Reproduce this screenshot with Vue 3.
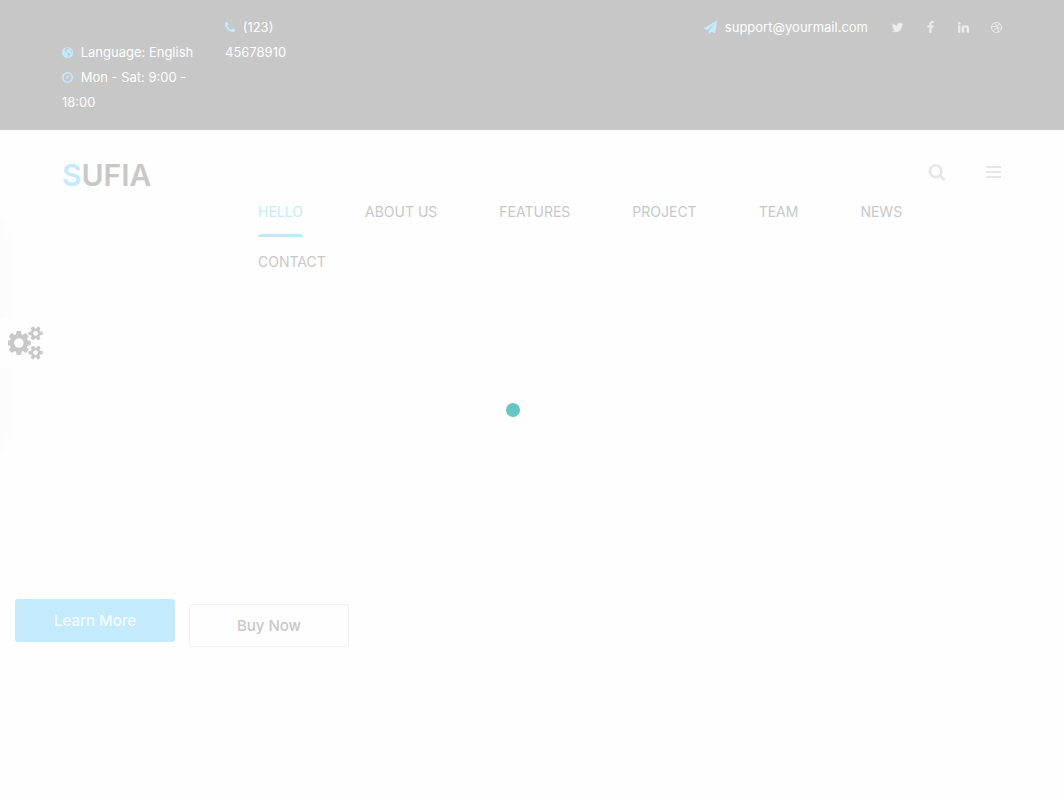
<script setup>
const links = ['Hello', 'About Us', 'Features', 'Project', 'Team', 'News', 'Contact']

const socials = [
  { name: 'Twitter', d: 'M1684 408q-67 98-162 167 1 14 1 42 0 130-38 259.5t-115.5 248.5-184.5 210.5-258 146-323 54.5q-271 0-496-145 35 4 78 4 225 0 401-138-105-2-188-64.5t-114-159.5q33 5 61 5 43 0 85-11-112-23-185.5-111.5t-73.5-205.5v-4q68 38 146 41-66-44-105-115t-39-154q0-88 44-163 121 149 294.5 238.5t371.5 99.5q-8-38-8-74 0-134 94.5-228.5t228.5-94.5q140 0 236 102 109-21 205-78-37 115-142 178 93-10 186-50z' },
  { name: 'Facebook', d: 'M1343 12v264h-157q-86 0-116 36t-30 108v189h293l-39 296h-254v759h-306v-759h-255v-296h255v-218q0-186 104-288.5t277-102.5q147 0 228 12z' },
  { name: 'LinkedIn', d: 'M477 625v991h-330v-991h330zm21-306q1 73-50.5 122t-135.5 49h-2q-82 0-132-49t-50-122q0-74 51.5-122.5t134.5-48.5 133 48.5 51 122.5zm1166 729v568h-329v-530q0-105-40.5-164.5t-126.5-59.5q-63 0-105.5 34.5t-63.5 85.5q-11 30-11 81v553h-329q2-399 2-647t-1-296l-1-48h329v144h-2q20-32 41-56t56.5-52 87-43.5 114.5-15.5q171 0 275 113.5t104 332.5z' },
]

const smallCog = 'v140q0 16-149 31-12 27-30 52 51 113 51 138 0 4-4 7-122 71-124 71-8 0-46-47t-52-68q-20 2-30 2t-30-2q-14 21-52 68t-46 47q-2 0-124-71-4-3-4-7 0-25 51-138-18-25-30-52-149-15-149-31v-140q0-16 149-31 13-29 30-52-51-113-51-138 0-4 4-7 4-2 35-20t59-34 30-16q8 0 46 46.5t52 67.5q20-2 30-2t30 2q51-71 92-112l6-2q4 0 124 70 4 3 4 7 0 25-51 138 17 23 30 52 149 15 149 31z'
const cogs = 'M832 896q0-106-75-181t-181-75-181 75-75 181 75 181 181 75 181-75 75-181zM1600 1408q0-52-38-90t-90-38-90 38-38 90q0 53 37.5 90.5t90.5 37.5 90.5-37.5 37.5-90.5zM1600 384q0-52-38-90t-90-38-90 38-38 90q0 53 37.5 90.5t90.5 37.5 90.5-37.5 37.5-90.5zM1216 805v185q0 10-7 19.5t-16 10.5l-155 24q-11 35-32 76 34 48 90 115 7 11 7 20 0 12-7 19-23 30-82.5 89.5t-78.5 59.5q-11 0-21-7l-115-90q-37 19-77 31-11 108-23 155-7 24-30 24h-186q-11 0-20-7.5t-10-17.5l-23-153q-34-10-75-31l-118 89q-7 7-20 7-11 0-21-8-144-133-144-160 0-9 7-19 10-14 41-53t47-61q-23-44-35-82l-152-24q-10-1-17-9.5t-7-19.5v-185q0-10 7-19.5t16-10.5l155-24q11-35 32-76-34-48-90-115-7-11-7-20 0-12 7-20 22-30 82-89t79-59q11 0 21 7l115 90q34-18 77-32 11-108 23-154 7-24 30-24h186q11 0 20 7.5t10 17.5l23 153q34 10 75 31l118-89q8-7 20-7 11 0 21 8 144 133 144 160 0 8-7 19-12 16-42 54t-45 60q23 48 34 82l152 23q10 2 17 10.5t7 19.5z'
  + 'M1856 1338' + smallCog + 'M1856 314' + smallCog
</script>

<template>
  <div class="page">
    <div class="topbar">
      <ul class="info hours">
        <li>
          <svg class="icon" viewBox="1 0 14 14" aria-hidden="true">
            <circle cx="7" cy="7" r="6" />
            <path class="land" d="M5.300 2.200l2-.4 1.600.8-.7.9-1.200.1-.5 1.100-1.200.4.300 1 1.600.4 1 .9 1.200.1.9.8-.5 1.200-1.200.6-.8 1.400-.6-.1-.1-1.900-.9-1 .3-1.200-1.500-.5-1-1.200-.4-1.300.8-1.300zM9.800 3.600l1.300.1.800 1.800-.3 1.200-1-.2-.9-1.200.4-.7z" />
          </svg>
          Language: English
        </li>
        <li>
          <svg class="icon" viewBox="128 0 1792 1792" aria-hidden="true"><path d="M1024 544v448q0 14-9 23t-23 9h-320q-14 0-23-9t-9-23v-64q0-14 9-23t23-9h224v-352q0-14 9-23t23-9h64q14 0 23 9t9 23zm416 352q0-148-73-273t-198-198-273-73-273 73-198 198-73 273 73 273 198 198 273 73 273-73 198-198 73-273zm224 0q0 209-103 385.500t-279.500 279.500-385.500 103-385.500-103-279.500-279.500-103-385.500 103-385.500 279.500-279.500 385.500-103 385.500 103 279.500 279.500 103 385.500z" /></svg>
          Mon - Sat: 9:00 - 18:00
        </li>
      </ul>
      <p class="info phone">
        <svg class="icon" viewBox="192 0 1664 1792" aria-hidden="true"><path d="M1600 1240q0 27-10 70.500t-21 68.500q-21 50-122 106-94 51-186 51-27 0-52.500-3.500t-57.500-12.500-47.500-14.500-55.500-20.500-49-18q-98-35-175-83-128-79-264.500-215.500t-215.500-264.500q-48-77-83-175-3-9-18-49t-20.500-55.500-14.500-47.500-12.500-57.500-3.500-52.500q0-92 51-186 56-101 106-122 25-11 68.500-21t70.500-10q14 0 21 3 18 6 53 76 11 19 30 54t35 63.500 31 53.500q3 4 17.500 25t21.500 35.500 7 28.500q0 20-28.500 50t-62 55-62 53-28.500 46q0 9 5 22.500t8.500 20.500 14 24 11.500 19q76 137 174 235t235 174q2 1 19 11.500t24 14 20.500 8.500 22.500 5q18 0 46-28.500t53-62 55-62 50-28.500q14 0 28.500 7t35.500 21.500 25 17.500q25 15 53.500 31t63.500 35 54 30q70 35 76 53 3 7 3 21z" /></svg>
        (123) 45678910
      </p>
      <div class="contact">
        <a class="mail" href="#mail">
          <svg class="icon" viewBox="0 0 1792 1792" aria-hidden="true"><path d="M1764 11q33 24 27 64l-256 1536q-5 29-32 45-14 8-31 8-11 0-24-5l-453-185-242 295q-18 23-49 23-13 0-22-4-19-7-30.500-23.500t-11.500-36.500v-349l864-1059-1069 925-395-162q-37-14-40-55-2-40 32-59l1664-960q15-9 32-9 20 0 36 11z" /></svg>
          support@yourmail.com
        </a>
        <a v-for="s in socials" :key="s.name" class="social" href="#social" :aria-label="s.name">
          <svg viewBox="0 0 1792 1792" aria-hidden="true"><path :d="s.d" /></svg>
        </a>
        <a class="social" href="#social" aria-label="Dribbble">
          <svg viewBox="0 0 14 14" aria-hidden="true">
            <g fill="none" stroke="currentColor">
              <circle cx="7" cy="7" r="5.500" />
              <path d="M5 1.800Q8.200 5.500 9.300 12M1.600 6.400Q8 6.500 10.800 3M3.200 11Q6 6.500 12.400 7.600" />
            </g>
          </svg>
        </a>
      </div>
    </div>

    <header class="header">
      <a class="logo" href="#home"><span>S</span>UFIA</a>
      <nav class="nav" aria-label="Main">
        <a v-for="(l, i) in links" :key="l" href="#section" :class="{ active: i === 0 }">{{ l }}</a>
      </nav>
      <div class="tools">
        <button type="button" aria-label="Search">
          <svg viewBox="0 0 1792 1792" aria-hidden="true"><path d="M1216 832q0-185-131.500-316.500t-316.500-131.500-316.500 131.500-131.500 316.500 131.500 316.500 316.500 131.500 316.500-131.500 131.500-316.500zm512 832q0 52-38 90t-90 38q-54 0-90-38l-343-342q-179 124-399 124-143 0-273.500-55.500t-225-150-150-225-55.500-273.500 55.500-273.500 150-225 225-150 273.500-55.500 273.500 55.500 225 150 150 225 55.500 273.500q0 220-124 399l343 343q37 37 37 90z" /></svg>
        </button>
        <button type="button" aria-label="Menu">
          <svg viewBox="0 0 18 18" aria-hidden="true">
            <rect x="2" y="3" width="15" height="2" rx=".5" />
            <rect x="2" y="8" width="15" height="2" rx=".5" />
            <rect x="2" y="13" width="15" height="2" rx=".5" />
          </svg>
        </button>
      </div>
    </header>

    <main class="hero">
      <a class="btn primary" href="#more">Learn More</a>
      <a class="btn outline" href="#buy">Buy Now</a>
    </main>

    <aside class="switcher">
      <button type="button" aria-label="Settings">
        <svg viewBox="0 0 1920 1792" aria-hidden="true"><path :d="cogs" fill-rule="evenodd" /></svg>
      </button>
    </aside>

    <div class="loader" role="status" aria-label="Loading"><span></span></div>
  </div>
</template>

<style>
body {
  background: #fefefe;
}
</style>

<style scoped>
.page {
  min-height: 100vh;
  overflow: hidden;
  font-family: Inter, "Open Sans", sans-serif;
  font-size: 13px;
  line-height: 25px;
  color: #c8c8c8;
}
.page * {
  box-sizing: border-box;
}
a {
  color: inherit;
  text-decoration: none;
}
button {
  padding: 0;
  border: 0;
  background: none;
  color: inherit;
}
svg {
  display: block;
  fill: currentColor;
}
.topbar {
  display: flex;
  align-items: flex-start;
  padding: 15px 61px 15px 62px;
  background: #c7c7c7;
  color: #fefefe;
}
.info {
  margin: 0;
  padding: 0;
  list-style: none;
}
.hours {
  width: 148px;
  padding-top: 25px;
}
.phone {
  width: 78px;
  margin-left: 15px;
}
.icon {
  display: inline-block;
  width: 13px;
  height: 13px;
  margin-right: 2px;
  vertical-align: -2px;
  color: #c4eafd;
}
.land {
  fill: #c7c7c7;
  opacity: 0.8;
}
.phone .icon {
  width: 12px;
}
.mail {
  margin-right: 3px;
}
.mail .icon {
  margin-right: 4px;
}
.contact {
  display: flex;
  align-items: center;
  gap: 20px;
  margin-left: auto;
}
.social {
  color: #ececec;
}
.social svg {
  width: 13px;
  height: 13px;
}
.header {
  display: flex;
  align-items: flex-start;
  padding: 32px 62px 0;
}
.logo {
  width: 196px;
  font-size: 30px;
  font-weight: 600;
  line-height: 26px;
}
.logo span {
  color: #c4eafd;
}
.nav {
  display: flex;
  flex: 1;
  flex-wrap: wrap;
  column-gap: 62px;
  padding-top: 25px;
  font-size: 14px;
  line-height: 50px;
  text-transform: uppercase;
}
.nav .active {
  position: relative;
  color: #c6ecf5;
}
.nav .active::after {
  content: "";
  position: absolute;
  right: 0;
  bottom: 0;
  left: 0;
  height: 3px;
  border-radius: 3px 3px 0 0;
  background: #c4e6f5;
}
.tools {
  display: flex;
  gap: 38px;
  padding-top: 1px;
  color: #e6e6e6;
}
.tools svg {
  width: 18px;
  height: 18px;
}
.hero {
  display: flex;
  gap: 14px;
  padding: 312px 15px 0;
}
.btn {
  width: 160px;
  height: 43px;
  border-radius: 3px;
  font-size: 15px;
  font-weight: 500;
  line-height: 43px;
  text-align: center;
}
.primary {
  background: #c4eafd;
  color: #f4fbff;
}
.outline {
  margin-top: 5px;
  border: 1px solid #f3f3f3;
  border-radius: 1px;
  line-height: 41px;
}
.switcher {
  position: fixed;
  top: 220px;
  right: 100%;
  width: 200px;
  height: 230px;
  box-shadow: 0 0 20px #f9f9f9;
}
.switcher button {
  position: absolute;
  top: 98px;
  left: 100%;
  display: grid;
  place-items: center;
  width: 52px;
  height: 50px;
  background: #fefefe;
}
.switcher svg {
  width: 36px;
  height: 34px;
}
.loader {
  position: fixed;
  inset: 20px 0 0;
  display: grid;
  place-content: center;
  grid-template-columns: 52px;
  pointer-events: none;
}
.loader span {
  width: 14px;
  height: 14px;
  border-radius: 50%;
  background: #66c5c5;
}
</style>
